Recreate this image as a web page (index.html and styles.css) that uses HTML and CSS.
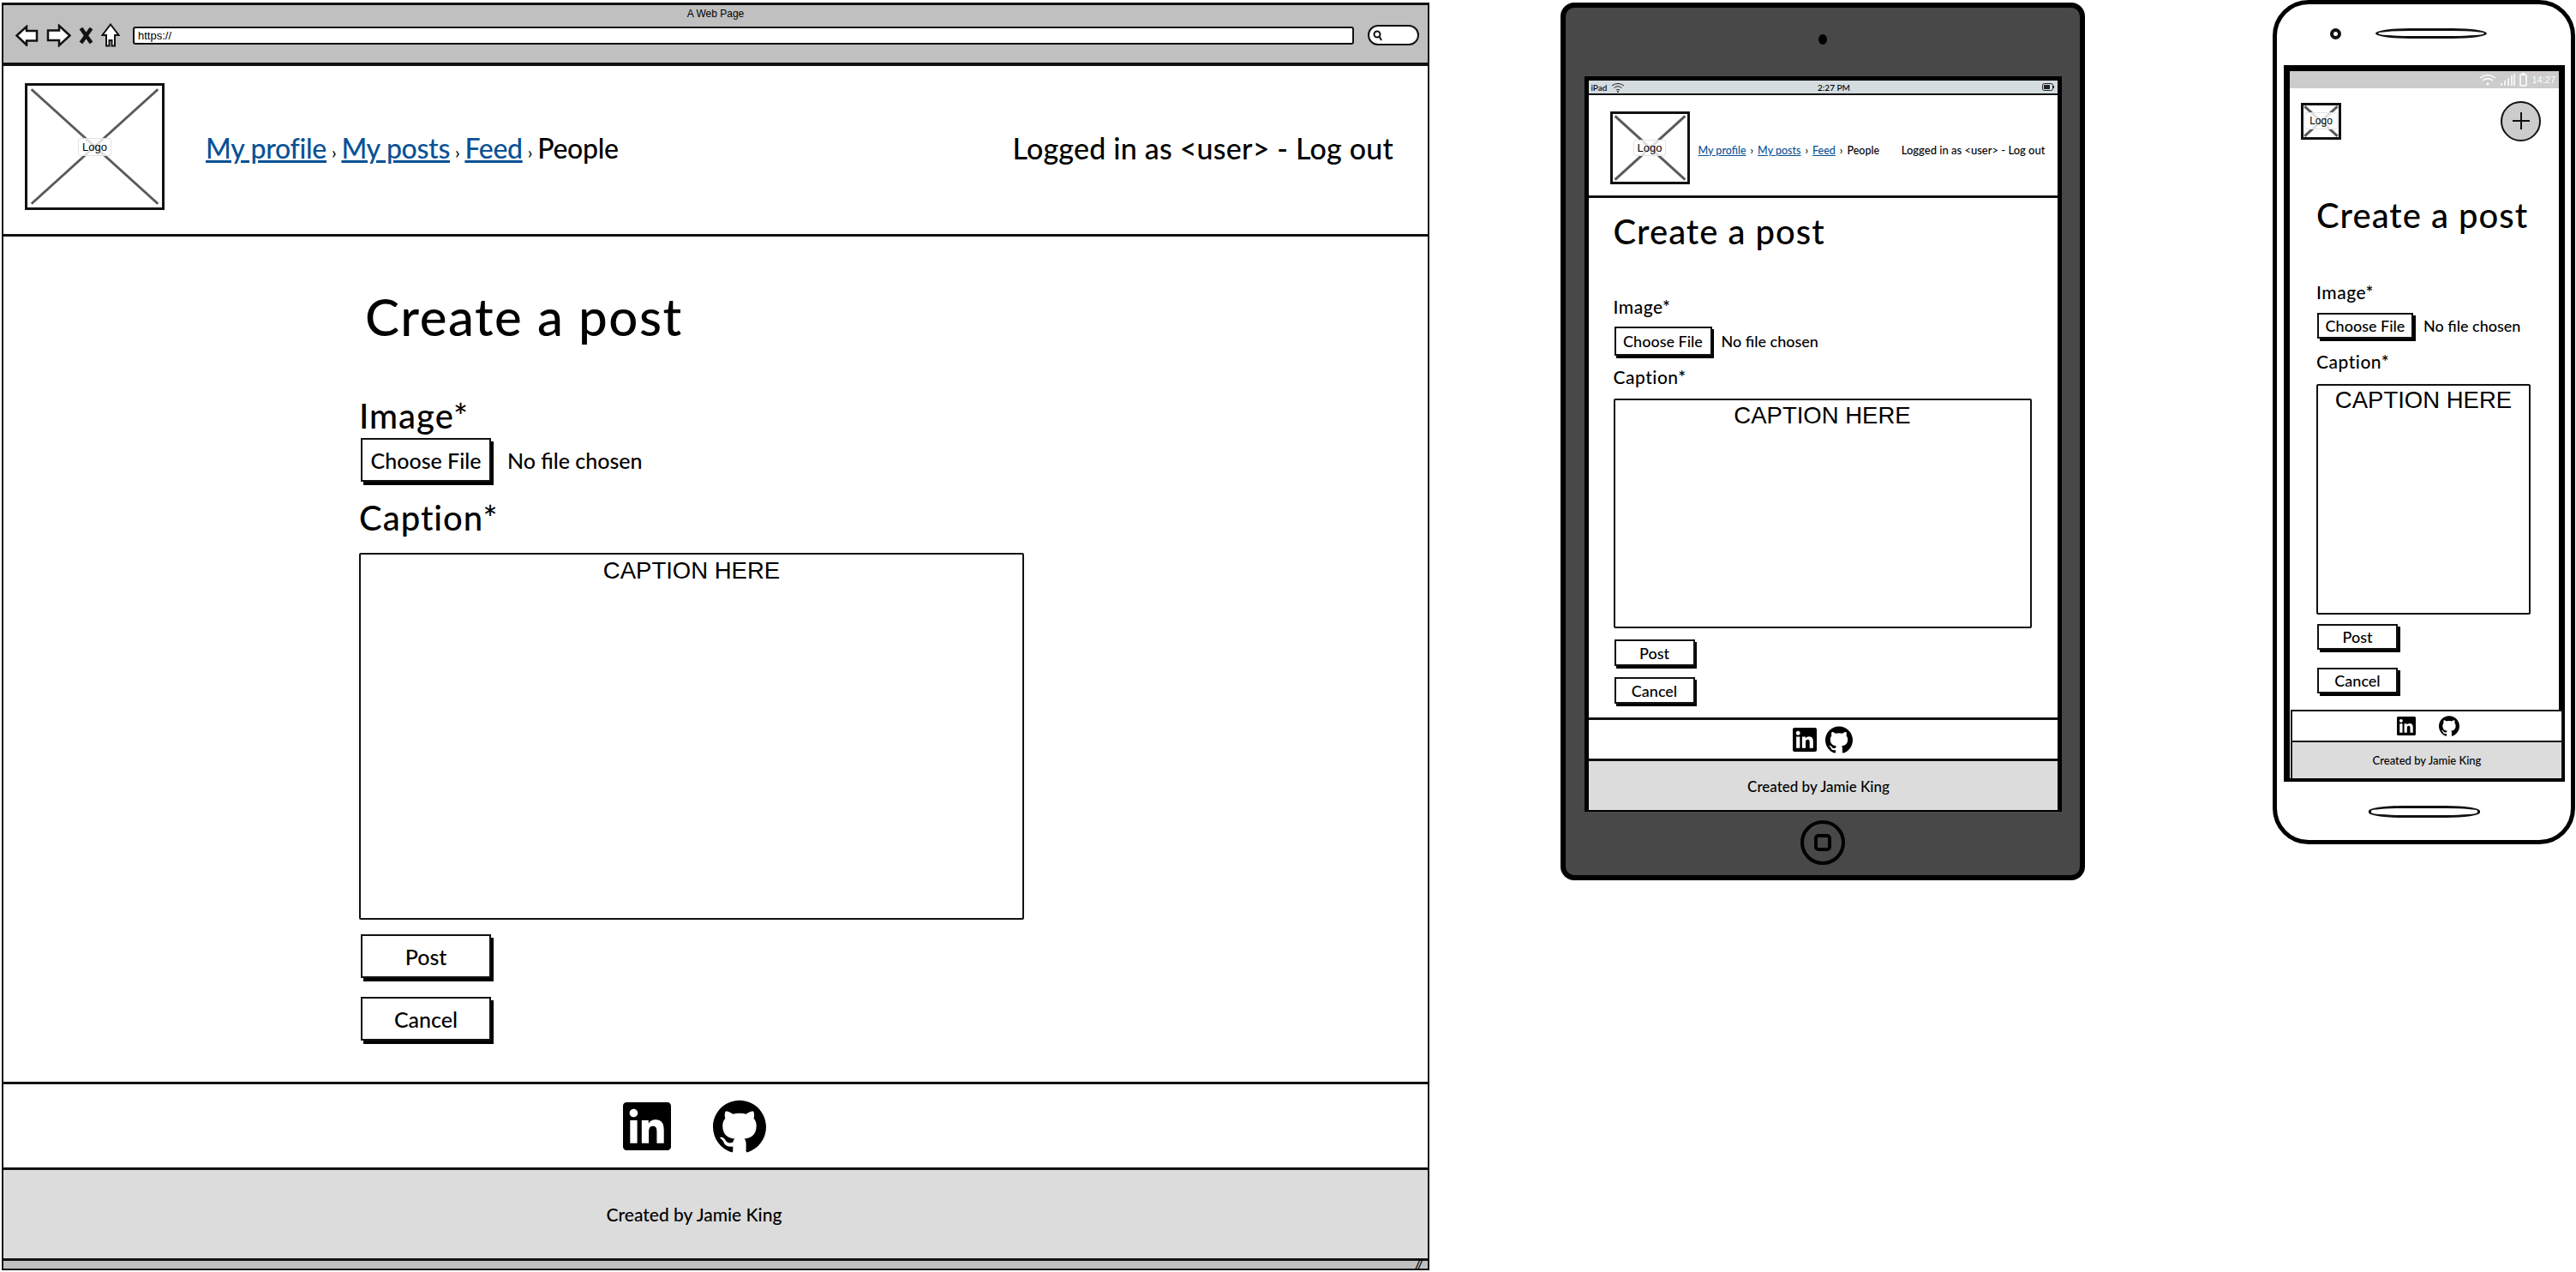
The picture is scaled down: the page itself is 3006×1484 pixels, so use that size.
FILE: index.html
```html
<!DOCTYPE html>
<html>
<head>
<meta charset="UTF-8">
  <title>Create a post wireframes</title>
  <link rel="stylesheet" href="styles.css">
</head>
<body>
<svg class="defs" width="0" height="0">
  <symbol id="linkedin" viewBox="0 0 24 24">
    <path d="M20.447 20.452h-3.554v-5.569c0-1.328-.027-3.037-1.852-3.037-1.853 0-2.136 1.445-2.136 2.939v5.667H9.351V9h3.414v1.561h.046c.477-.9 1.637-1.85 3.37-1.85 3.601 0 4.267 2.37 4.267 5.455v6.286zM5.337 7.433c-1.144 0-2.063-.926-2.063-2.065 0-1.138.92-2.063 2.063-2.063 1.14 0 2.064.925 2.064 2.063 0 1.139-.925 2.065-2.064 2.065zm1.782 13.019H3.555V9h3.564v11.452zM22.225 0H1.771C.792 0 0 .774 0 1.729v20.542C0 23.227.792 24 1.771 24h20.451C23.2 24 24 23.227 24 22.271V1.729C24 .774 23.2 0 22.222 0h.003z"/>
  </symbol>
  <symbol id="github" viewBox="0 0 24 24">
    <path d="M12 .297c-6.63 0-12 5.373-12 12 0 5.303 3.438 9.8 8.205 11.385.6.113.82-.258.82-.577 0-.285-.01-1.04-.015-2.04-3.338.724-4.042-1.61-4.042-1.61C4.422 18.07 3.633 17.7 3.633 17.7c-1.087-.744.084-.729.084-.729 1.205.084 1.838 1.236 1.838 1.236 1.07 1.835 2.809 1.305 3.495.998.108-.776.417-1.305.76-1.605-2.665-.3-5.466-1.332-5.466-5.93 0-1.31.465-2.38 1.235-3.22-.135-.303-.54-1.523.105-3.176 0 0 1.005-.322 3.3 1.23.96-.267 1.98-.399 3-.405 1.02.006 2.04.138 3 .405 2.28-1.552 3.285-1.23 3.285-1.23.645 1.653.24 2.873.12 3.176.765.84 1.23 1.91 1.23 3.22 0 4.61-2.805 5.625-5.475 5.92.42.36.81 1.096.81 2.22 0 1.606-.015 2.896-.015 3.286 0 .315.21.69.825.57C20.565 22.092 24 17.592 24 12.297c0-6.627-5.373-12-12-12"/>
  </symbol>
  <symbol id="cross" viewBox="0 0 100 100" preserveAspectRatio="none">
    <path d="M3 3 L97 97 M97 3 L3 97" stroke="#5a5a5a" stroke-width="3" vector-effect="non-scaling-stroke" fill="none"/>
  </symbol>
</svg>

<!-- desktop -->
<div class="device browser">
  <div class="chrome">
    <div class="chrome-title">A Web Page</div>
    <div class="toolbar">
      <svg class="nav-icon" width="27" height="25" viewBox="0 0 27 25"><path d="M1.5 12.5 L13 2 L13 7 L25 7 L25 18.500 L13 18.500 L13 23.500 Z" fill="#fff" stroke="#111" stroke-width="2.500"/></svg>
      <svg class="nav-icon" width="29" height="27" viewBox="0 0 29 27"><path d="M27.500 13.500 L15 2 L15 7.500 L2 7.500 L2 19 L15 19 L15 25 Z" fill="#fff" stroke="#111" stroke-width="2.500"/></svg>
      <svg class="nav-icon" width="17" height="19" viewBox="0 0 17 19"><path d="M2.500 1 L14.500 18 M14.500 1 L2.500 18" stroke="#111" stroke-width="4.500" fill="none"/></svg>
      <svg class="nav-icon" width="22" height="28" viewBox="0 0 22 28"><path d="M11 1.500 L20.500 14 L16 14 L16 26.500 L12.500 26.500 L12.500 20 L9.500 20 L9.500 26.500 L6 26.500 L6 14 L1.500 14 Z" fill="#fff" stroke="#111" stroke-width="2"/></svg>
      <div class="url-bar">https://</div>
      <div class="search-pill">
        <svg width="14" height="14" viewBox="0 0 14 14"><circle cx="6" cy="6" r="3.500" fill="#fff" stroke="#111" stroke-width="2"/><path d="M8.500 8.500 L11 13" stroke="#111" stroke-width="2"/></svg>
      </div>
    </div>
  </div>
  <div class="site-header">
    <div class="logo"><svg class="logo-cross"><use href="#cross"/></svg><span class="logo-text">Logo</span></div>
    <div class="crumbs">
      <a href="#">My profile</a><span class="sep">›</span><a href="#">My posts</a><span class="sep">›</span><a href="#">Feed</a><span class="sep">›</span><span>People</span>
    </div>
    <div class="login">Logged in as &lt;user&gt; - Log out</div>
  </div>
  <div class="main">
    <h1 class="title">Create a post</h1>
    <div class="label label-image">Image*</div>
    <div class="file-row"><span class="btn file-btn">Choose File</span><span class="file-name">No file chosen</span></div>
    <div class="label label-caption">Caption*</div>
    <div class="caption">CAPTION HERE</div>
    <div class="btn action action-post">Post</div>
    <div class="btn action action-cancel">Cancel</div>
  </div>
  <div class="social">
    <svg class="icon-in"><use href="#linkedin"/></svg>
    <svg class="icon-gh"><use href="#github"/></svg>
  </div>
  <div class="footer">Created by Jamie King</div>
  <div class="status-strip"><span class="grip">//</span></div>
</div>

<!-- tablet -->
<div class="device tablet">
  <div class="camera"></div>
  <div class="screen">
    <div class="ipad-bar">
      <span class="ipad-left">iPad
        <svg width="16" height="12" viewBox="0 0 16 12"><path d="M1 4 Q8 -1 15 4 M3.500 6.500 Q8 3 12.500 6.500 M6 9 Q8 7.500 10 9" stroke="#222" stroke-width="1" fill="none"/><circle cx="8" cy="11" r="1" fill="#222"/></svg>
      </span>
      <span class="ipad-time">2:27 PM</span>
      <svg class="ipad-batt" width="14" height="9" viewBox="0 0 14 9"><rect x="0.500" y="0.500" width="12" height="8" rx="2" fill="none" stroke="#222"/><rect x="2" y="2" width="7" height="5" fill="#222"/><rect x="13" y="3" width="1" height="3" fill="#222"/></svg>
    </div>
    <div class="site-header">
      <div class="logo"><svg class="logo-cross"><use href="#cross"/></svg><span class="logo-text">Logo</span></div>
      <div class="crumbs">
        <a href="#">My profile</a><span class="sep">›</span><a href="#">My posts</a><span class="sep">›</span><a href="#">Feed</a><span class="sep">›</span><span>People</span>
      </div>
      <div class="login">Logged in as &lt;user&gt; - Log out</div>
    </div>
    <div class="main">
      <h1 class="title">Create a post</h1>
      <div class="label label-image">Image*</div>
      <div class="file-row"><span class="btn file-btn">Choose File</span><span class="file-name">No file chosen</span></div>
      <div class="label label-caption">Caption*</div>
      <div class="caption">CAPTION HERE</div>
      <div class="btn action action-post">Post</div>
      <div class="btn action action-cancel">Cancel</div>
    </div>
    <div class="social">
      <svg class="icon-in"><use href="#linkedin"/></svg>
      <svg class="icon-gh"><use href="#github"/></svg>
    </div>
    <div class="footer">Created by Jamie King</div>
  </div>
  <div class="home-btn"><div class="home-square"></div></div>
</div>

<!-- phone -->
<div class="device phone">
  <div class="phone-top">
    <div class="phone-cam"></div>
    <div class="speaker"></div>
  </div>
  <div class="screen">
    <div class="android-bar">
      <svg width="20" height="14" viewBox="0 0 20 14"><path d="M1 5 Q10 -2 19 5 M4 8 Q10 3.500 16 8" stroke="#fff" stroke-width="1.500" fill="none"/><circle cx="10" cy="12" r="1.500" fill="#fff"/></svg>
      <svg width="17" height="14" viewBox="0 0 17 14"><path d="M1 14 V11 M5 14 V8 M9 14 V5 M13 14 V2 M16 14 V0" stroke="#fff" stroke-width="1.500" fill="none"/></svg>
      <svg width="9" height="16" viewBox="0 0 9 16"><rect x="1" y="2" width="7" height="13" rx="1" fill="none" stroke="#fff" stroke-width="1.500"/><rect x="3" y="0" width="3" height="2" fill="#fff"/></svg>
      <span>14:27</span>
    </div>
    <div class="phone-header">
      <div class="logo"><svg class="logo-cross"><use href="#cross"/></svg><span class="logo-text">Logo</span></div>
      <div class="plus-btn">
        <svg width="22" height="22" viewBox="0 0 22 22"><path d="M11 1 V21 M1 11 H21" stroke="#111" stroke-width="2"/></svg>
      </div>
    </div>
    <div class="main">
      <h1 class="title">Create a post</h1>
      <div class="label label-image">Image*</div>
      <div class="file-row"><span class="btn file-btn">Choose File</span><span class="file-name">No file chosen</span></div>
      <div class="label label-caption">Caption*</div>
      <div class="caption">CAPTION HERE</div>
      <div class="btn action action-post">Post</div>
      <div class="btn action action-cancel">Cancel</div>
    </div>
    <div class="social">
      <svg class="icon-in"><use href="#linkedin"/></svg>
      <svg class="icon-gh"><use href="#github"/></svg>
    </div>
    <div class="footer">Created by Jamie King</div>
  </div>
  <div class="speaker speaker-bottom"></div>
</div>
</body>
</html>
```

FILE: styles.css
```css
* {
  box-sizing: border-box;
}

body {
  margin: 0;
  width: 3006px;
  height: 1484px;
  position: relative;
  overflow: hidden;
  background: #fff;
  color: #000;
  font-family: Lato, "Noto Sans", sans-serif;
  font-weight: 500;
}

.defs {
  position: absolute;
}

/* each device sits on the free canvas */
.device {
  position: absolute;
  display: flex;
  flex-direction: column;
}

/* shared bits */
.site-header {
  display: flex;
  align-items: center;
  background: #fff;
  border-bottom: 3px solid #111;
}

.logo {
  position: relative;
  flex: none;
  display: flex;
  align-items: center;
  justify-content: center;
  border: 3px solid #111;
  background: #fff;
}

.logo-cross {
  position: absolute;
  left: 0;
  top: 0;
  width: 100%;
  height: 100%;
}

.logo-text {
  position: relative;
  font-family: "Liberation Sans", sans-serif;
  font-weight: 400;
  background: rgba(255, 255, 255, 0.8);
  border: 1px solid #e2e2e2;
  border-radius: 3px;
}

.crumbs {
  display: flex;
  align-items: baseline;
}

.crumbs a {
  color: #0a5196;
}

.login {
  margin-left: auto;
}

.main {
  flex: 1;
  display: flex;
  flex-direction: column;
  align-items: flex-start;
  background: #fff;
}

.title {
  margin: 0;
  font-weight: 500;
  white-space: nowrap;
}

.file-row {
  display: flex;
  align-items: center;
}

.btn {
  display: flex;
  align-items: center;
  justify-content: center;
  background: #fff;
  border: 2px solid #111;
  box-shadow: 2px 3px 0 #000;
}

.caption {
  font-family: "Liberation Sans", sans-serif;
  font-weight: 400;
  text-align: center;
  border: 2px solid #111;
  border-radius: 2px;
}

.social {
  display: flex;
  align-items: center;
  justify-content: center;
  background: #fff;
  border-top: 3px solid #111;
  border-bottom: 3px solid #111;
}

.footer {
  display: flex;
  align-items: center;
  justify-content: center;
  background: #dcdcdc;
}

/* desktop */
.browser {
  left: 2px;
  top: 3px;
  width: 1666px;
  height: 1479px;
  border: 2px solid #111;
  border-top-width: 3px;
}

.chrome {
  flex: none;
  height: 71px;
  background: #c0c0c0;
  border-bottom: 4px solid #111;
}

.chrome-title {
  text-align: center;
  font-family: "Liberation Sans", sans-serif;
  font-weight: 400;
  font-size: 12px;
  line-height: 20px;
}

.toolbar {
  display: flex;
  align-items: center;
  gap: 9px;
  padding: 0 10px 0 14px;
  margin-top: 1px;
}

.url-bar {
  flex: 1;
  height: 21px;
  margin-left: 6px;
  padding-left: 4px;
  background: #fff;
  border: 2px solid #111;
  border-radius: 3px;
  font-family: "Liberation Sans", sans-serif;
  font-weight: 400;
  font-size: 13px;
  line-height: 17px;
}

.search-pill {
  flex: none;
  width: 60px;
  height: 24px;
  margin-left: 7px;
  padding-left: 3px;
  display: flex;
  align-items: center;
  background: #fff;
  border: 2px solid #111;
  border-radius: 12px;
}

.browser .site-header {
  flex: none;
  height: 199px;
  padding: 0 40px 0 25px;
}

.browser .logo {
  width: 163px;
  height: 148px;
  margin-bottom: 8px;
}

.browser .logo-text {
  font-size: 13px;
  padding: 2px 4px;
}

.browser .crumbs {
  margin: 0 0 5px 48px;
  font-size: 32px;
  letter-spacing: -0.3px;
}

.browser .sep {
  font-size: 20px;
  padding: 0 6px;
}

.browser .login {
  margin-bottom: 5px;
  font-size: 34px;
  letter-spacing: 0.2px;
}

.browser .main {
  padding: 58px 0 0 415px;
}

.browser .title {
  margin-left: 7px;
  font-size: 60px;
  line-height: 70px;
  letter-spacing: 1.5px;
}

.browser .label {
  margin-top: 61px;
  font-size: 40px;
  line-height: 40px;
  letter-spacing: 1px;
}

.browser .file-row {
  margin-top: 6px;
}

.browser .file-btn {
  width: 152px;
  height: 51px;
  margin-left: 2px;
  font-size: 25px;
  box-shadow: 3px 4px 0 #000;
}

.browser .file-name {
  margin-left: 19px;
  font-size: 25px;
}

.browser .label-caption {
  margin-top: 22px;
}

.browser .caption {
  width: 776px;
  height: 428px;
  margin-top: 21px;
  font-size: 27.500px;
  line-height: 38px;
}

.browser .action {
  width: 152px;
  height: 51px;
  margin-left: 2px;
  font-size: 25px;
  box-shadow: 3px 4px 0 #000;
}

.browser .action-post {
  margin-top: 17px;
}

.browser .action-cancel {
  margin-top: 22px;
}

.browser .social {
  flex: none;
  height: 103px;
  gap: 49px;
  padding-right: 50px;
}

.browser .icon-in {
  width: 56px;
  height: 56px;
}

.browser .icon-gh {
  width: 62px;
  height: 62px;
}

.browser .footer {
  flex: none;
  height: 106px;
  padding-right: 50px;
  font-size: 21px;
  border-bottom: 3px solid #111;
}

.status-strip {
  flex: none;
  height: 9px;
  display: flex;
  justify-content: flex-end;
  background: #c0c0c0;
}

.grip {
  padding-right: 6px;
  font-size: 13px;
  font-weight: 700;
  font-style: italic;
  line-height: 9px;
}

/* tablet */
.tablet {
  left: 1821px;
  top: 3px;
  width: 612px;
  height: 1024px;
  align-items: center;
  background: #484848;
  border: 6px solid #000;
  border-radius: 16px;
}

.camera {
  width: 10px;
  height: 12px;
  margin-top: 31px;
  background: #000;
  border-radius: 50%;
}

.tablet .screen {
  display: flex;
  flex-direction: column;
  width: 557px;
  height: 858px;
  margin-top: 37px;
  border: 5px solid #000;
  border-bottom-width: 2px;
}

.ipad-bar {
  flex: none;
  display: flex;
  align-items: center;
  justify-content: space-between;
  height: 17px;
  padding: 0 3px;
  background: #d5dce0;
  border-bottom: 2px solid #111;
  font-size: 10px;
}

.ipad-left {
  display: flex;
  align-items: center;
  gap: 5px;
}

.tablet .site-header {
  flex: none;
  height: 120px;
  padding: 5px 14px 0 25px;
}

.tablet .logo {
  width: 93px;
  height: 85px;
}

.tablet .logo-text {
  font-size: 13px;
  padding: 1px 4px;
}

.tablet .crumbs {
  margin: 6px 0 0 10px;
  font-size: 12.500px;
}

.tablet .sep {
  padding: 0 5px;
}

.tablet .login {
  margin-top: 6px;
  font-size: 13px;
}

.tablet .main {
  padding: 14px 0 0 29px;
}

.tablet .title {
  font-size: 40px;
  line-height: 50px;
  letter-spacing: 1px;
}

.tablet .label {
  margin-top: 50px;
  font-size: 21px;
  line-height: 26px;
  letter-spacing: 0.5px;
}

.tablet .label-caption {
  margin-top: 12px;
}

.tablet .file-row {
  margin-top: 10px;
}

.tablet .file-btn {
  width: 114px;
  height: 34px;
  margin-left: 1px;
  font-size: 18px;
}

.tablet .file-name {
  margin-left: 11px;
  font-size: 18px;
}

.tablet .caption {
  width: 488px;
  height: 268px;
  margin-top: 12px;
  font-size: 27.500px;
  line-height: 36px;
}

.tablet .action {
  width: 94px;
  height: 31px;
  margin-left: 1px;
  font-size: 18px;
}

.tablet .action-post {
  margin-top: 13px;
}

.tablet .action-cancel {
  margin-top: 13px;
}

.tablet .social {
  flex: none;
  height: 51px;
  gap: 10px;
}

.tablet .icon-in {
  width: 28px;
  height: 28px;
}

.tablet .icon-gh {
  width: 32px;
  height: 32px;
}

.tablet .footer {
  flex: none;
  height: 57px;
  padding: 2px 10px 0 0;
  font-size: 17px;
}

.home-btn {
  flex: none;
  display: flex;
  align-items: center;
  justify-content: center;
  width: 52px;
  height: 52px;
  margin-top: 10px;
  border: 4px solid #000;
  border-radius: 50%;
}

.home-square {
  width: 20px;
  height: 20px;
  border: 4px solid #000;
  border-radius: 5px;
}

/* phone */
.phone {
  left: 2652px;
  top: 0;
  width: 353px;
  height: 985px;
  background: #fff;
  border: 5px solid #000;
  border-radius: 42px;
}

.phone-top {
  flex: none;
  display: flex;
  align-items: center;
  gap: 40px;
  height: 71px;
  padding: 0 0 3px 62px;
}

.phone-cam {
  width: 13px;
  height: 13px;
  border: 4px solid #111;
  border-radius: 50%;
}

.speaker {
  width: 130px;
  height: 12px;
  border: 3px solid #111;
  border-radius: 40px / 6px;
}

.speaker-bottom {
  height: 14px;
  margin: 28px 0 0 107px;
}

.phone .screen {
  flex: none;
  display: flex;
  flex-direction: column;
  width: 328px;
  height: 836px;
  margin-left: 8px;
  border: 7px solid #000;
  border-bottom-width: 4px;
}

.android-bar {
  flex: none;
  display: flex;
  align-items: center;
  justify-content: flex-end;
  gap: 5px;
  height: 20px;
  padding-right: 4px;
  background: #ccc;
  color: #fff;
  font-family: "Liberation Sans", sans-serif;
  font-weight: 400;
  font-size: 11px;
}

.phone-header {
  flex: none;
  display: flex;
  align-items: center;
  justify-content: space-between;
  height: 76px;
  padding: 0 21px 0 13px;
}

.phone .logo {
  width: 47px;
  height: 43px;
}

.phone .logo-text {
  font-size: 12px;
  padding: 2px 5px;
}

.plus-btn {
  display: flex;
  align-items: center;
  justify-content: center;
  width: 47px;
  height: 47px;
  background: #ccc;
  border: 2px solid #111;
  border-radius: 50%;
}

.phone .main {
  padding: 47px 0 0 31px;
}

.phone .title {
  font-size: 40px;
  line-height: 50px;
  letter-spacing: 1px;
}

.phone .label {
  margin-top: 52px;
  font-size: 21px;
  line-height: 26px;
  letter-spacing: 0.5px;
}

.phone .label-caption {
  margin-top: 14px;
}

.phone .file-row {
  margin-top: 11px;
}

.phone .file-btn {
  width: 112px;
  height: 30px;
  margin-left: 1px;
  font-size: 18px;
  box-shadow: 3px 3px 0 #000;
}

.phone .file-name {
  margin-left: 12px;
  font-size: 18px;
}

.phone .caption {
  width: 250px;
  height: 269px;
  margin-top: 13px;
  font-size: 27.500px;
  line-height: 34px;
}

.phone .action {
  width: 94px;
  height: 30px;
  margin-left: 1px;
  font-size: 18px;
  box-shadow: 3px 3px 0 #000;
}

.phone .action-post {
  margin-top: 11px;
}

.phone .action-cancel {
  margin-top: 21px;
}

.phone .social {
  flex: none;
  height: 38px;
  gap: 27px;
  margin-right: -5px;
  margin-left: 1px;
  padding-left: 3px;
  border-width: 2px;
  border-right: 2px solid #111;
  border-left: 2px solid #111;
}

.phone .icon-in {
  width: 22px;
  height: 22px;
}

.phone .icon-gh {
  width: 24px;
  height: 24px;
}

.phone .footer {
  flex: none;
  height: 42px;
  margin-right: -5px;
  margin-left: 1px;
  font-size: 13px;
  border-left: 2px solid #111;
  border-right: 2px solid #111;
}
```
